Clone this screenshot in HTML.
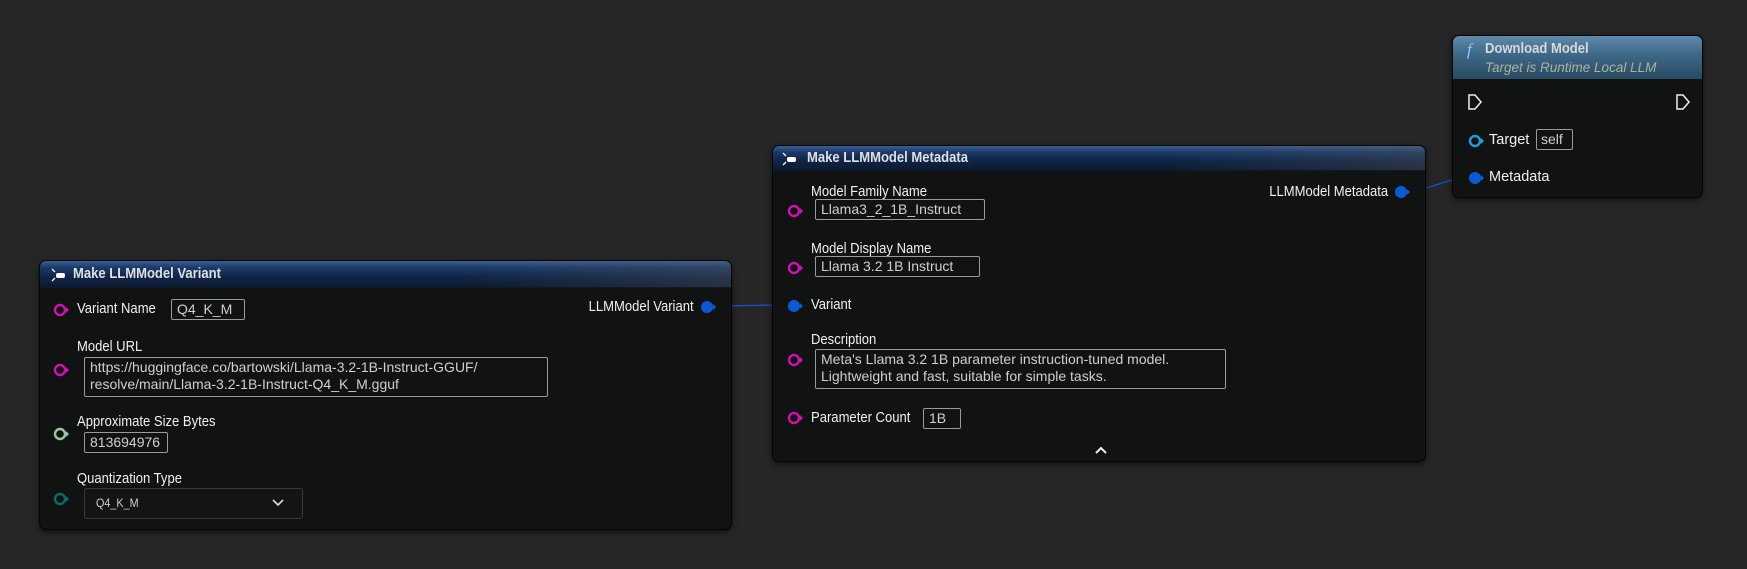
<!DOCTYPE html>
<html><head><meta charset="utf-8"><style>
*{box-sizing:border-box;margin:0;padding:0}
body{width:1747px;height:569px;background:#262626;font-family:"Liberation Sans",sans-serif;color:#e6e6e6;position:relative;overflow:hidden}
.node{position:absolute;background:#111312;border:1px solid #050505;border-radius:7px;box-shadow:0 2px 6px rgba(0,0,0,.6)}
.hdr{position:absolute;left:0;top:0;right:0;border-radius:6px 6px 0 0;border-bottom:1px solid #0c1a2e}
.blue{background:linear-gradient(90deg,rgba(0,0,0,0) 60%,rgba(90,90,90,.35) 100%),linear-gradient(180deg,#3a5f94 0%,#1b3a6a 25%,#0f2547 60%,#0c1a30 100%)}
.t{position:absolute;font-size:14.5px;white-space:nowrap;color:#f0f0f0;transform:scaleX(.9);transform-origin:left center}
.tr{transform-origin:right center;text-align:right}
.tt{position:absolute;font-size:14.5px;font-weight:bold;color:#d6d6d6;white-space:nowrap;transform:scaleX(.9);transform-origin:left center}
.box{position:absolute;border:1px solid #9a9a9a;border-radius:2px;font-size:14px;color:#cfcfcf;padding:1px 5px;line-height:17px;white-space:nowrap}
.pin{position:absolute}
</style></head><body>
<svg width="1747" height="569" style="position:absolute;left:0;top:0">
<path d="M706 306 C740 306,760 305,794 305" stroke="#1050c0" stroke-width="1.5" fill="none"/>
<path d="M1400 192 C1430 192,1445 177,1474 177" stroke="#1050c0" stroke-width="1.5" fill="none"/>
</svg>

<!-- Variant node -->
<div class="node" style="left:39px;top:260px;width:693px;height:270px">
<div class="hdr blue" style="height:27px"></div>
<svg class="pin" style="left:10px;top:6px" width="16" height="16"><path d="M2 2l3 3M2 14l3-3" stroke="#fff" stroke-width="1.3"/><rect x="6" y="6" width="9" height="5" rx="2" fill="#fff"/></svg>
<div class="tt" style="left:33px;top:5px;color:#e0e0e0">Make LLMModel Variant</div>
<svg class="pin" style="left:13px;top:41px" width="16" height="16"><circle cx="7" cy="8" r="5" stroke="#d010b0" stroke-width="2.4" fill="none"/><path d="M13 5l3 3-3 3z" fill="#d010b0"/></svg>
<div class="t" style="left:37px;top:40px">Variant Name</div>
<div class="box" style="left:131px;top:38px;width:74px">Q4_K_M</div>
<div class="t tr" style="right:37px;top:38px">LLMModel Variant</div>
<svg class="pin" style="left:660px;top:38px" width="18" height="16"><circle cx="7" cy="8" r="6" fill="#0a5ad8"/><path d="M13 5l3 3-3 3z" fill="#0a5ad8"/></svg>
<div class="t" style="left:37px;top:78px">Model URL</div>
<svg class="pin" style="left:13px;top:101px" width="16" height="16"><circle cx="7" cy="8" r="5" stroke="#d010b0" stroke-width="2.4" fill="none"/><path d="M13 5l3 3-3 3z" fill="#d010b0"/></svg>
<div class="box" style="left:44px;top:96px;width:464px;height:40px">https://huggingface.co/bartowski/Llama-3.2-1B-Instruct-GGUF/<br>resolve/main/Llama-3.2-1B-Instruct-Q4_K_M.gguf</div>
<div class="t" style="left:37px;top:153px">Approximate Size Bytes</div>
<svg class="pin" style="left:13px;top:165px" width="16" height="16"><circle cx="7" cy="8" r="5" stroke="#9ac89a" stroke-width="2.4" fill="none"/><path d="M13 5l3 3-3 3z" fill="#9ac89a"/></svg>
<div class="box" style="left:44px;top:171px;width:84px">813694976</div>
<div class="t" style="left:37px;top:210px">Quantization Type</div>
<svg class="pin" style="left:13px;top:230px" width="16" height="16"><circle cx="7" cy="8" r="5" stroke="#0e6a66" stroke-width="2.4" fill="none"/><path d="M13 5l3 3-3 3z" fill="#0e6a66"/></svg>
<div style="position:absolute;left:44px;top:227px;width:219px;height:31px;border:1px solid #3a3a3a;border-radius:3px;background:#141414"></div>
<div class="t" style="left:56px;top:235px;font-size:12px;color:#ccc">Q4_K_M</div>
<svg class="pin" style="left:232px;top:237px" width="12" height="10"><path d="M1 2l5 5 5-5" stroke="#ddd" stroke-width="1.6" fill="none"/></svg>
</div>

<!-- Metadata node -->
<div class="node" style="left:772px;top:145px;width:654px;height:317px">
<div class="hdr blue" style="height:25px"></div>
<svg class="pin" style="left:8px;top:5px" width="16" height="16"><path d="M2 2l3 3M2 14l3-3" stroke="#fff" stroke-width="1.3"/><rect x="6" y="6" width="9" height="5" rx="2" fill="#fff"/></svg>
<div class="tt" style="left:34px;top:4px;color:#e0e0e0">Make LLMModel Metadata</div>
<svg class="pin" style="left:14px;top:57px" width="16" height="16"><circle cx="7" cy="8" r="5" stroke="#d010b0" stroke-width="2.4" fill="none"/><path d="M13 5l3 3-3 3z" fill="#d010b0"/></svg>
<div class="t" style="left:38px;top:38px">Model Family Name</div>
<div class="box" style="left:42px;top:53px;width:170px">Llama3_2_1B_Instruct</div>
<div class="t tr" style="right:37px;top:38px">LLMModel Metadata</div>
<svg class="pin" style="left:621px;top:38px" width="18" height="16"><circle cx="7" cy="8" r="6" fill="#0a5ad8"/><path d="M13 5l3 3-3 3z" fill="#0a5ad8"/></svg>
<svg class="pin" style="left:14px;top:114px" width="16" height="16"><circle cx="7" cy="8" r="5" stroke="#d010b0" stroke-width="2.4" fill="none"/><path d="M13 5l3 3-3 3z" fill="#d010b0"/></svg>
<div class="t" style="left:38px;top:95px">Model Display Name</div>
<div class="box" style="left:42px;top:110px;width:165px">Llama 3.2 1B Instruct</div>
<svg class="pin" style="left:14px;top:152px" width="18" height="16"><circle cx="7" cy="8" r="6" fill="#0a5ad8"/><path d="M13 5l3 3-3 3z" fill="#0a5ad8"/></svg>
<div class="t" style="left:38px;top:151px">Variant</div>
<div class="t" style="left:38px;top:186px">Description</div>
<svg class="pin" style="left:14px;top:206px" width="16" height="16"><circle cx="7" cy="8" r="5" stroke="#d010b0" stroke-width="2.4" fill="none"/><path d="M13 5l3 3-3 3z" fill="#d010b0"/></svg>
<div class="box" style="left:42px;top:203px;width:411px;height:40px">Meta's Llama 3.2 1B parameter instruction-tuned model.<br>Lightweight and fast, suitable for simple tasks.</div>
<svg class="pin" style="left:14px;top:264px" width="16" height="16"><circle cx="7" cy="8" r="5" stroke="#d010b0" stroke-width="2.4" fill="none"/><path d="M13 5l3 3-3 3z" fill="#d010b0"/></svg>
<div class="t" style="left:38px;top:264px">Parameter Count</div>
<div class="box" style="left:150px;top:262px;width:38px">1B</div>
<svg class="pin" style="left:322px;top:300px" width="12" height="8"><path d="M1 7l5-5 5 5" stroke="#eee" stroke-width="2" fill="none"/></svg>
</div>

<!-- Download node -->
<div class="node" style="left:1452px;top:35px;width:251px;height:163px">
<div class="hdr" style="height:43px;background:linear-gradient(180deg,#5f8aac 0%,#3f6a8a 40%,#2a4a62 100%);border-bottom:none"></div>
<div style="position:absolute;left:14px;top:4px;font-family:'Liberation Serif',serif;font-style:italic;font-size:17px;color:#8ec8ff">f</div>
<div class="tt" style="left:32px;top:5px;color:#d8d8d8">Download Model</div>
<div style="position:absolute;left:32px;top:24px;font-size:13.5px;font-style:italic;color:#a9b39a;white-space:nowrap">Target is Runtime Local LLM</div>
<svg class="pin" style="left:14px;top:57px" width="16" height="18"><path d="M2 2h6l6 7-6 7H2z" stroke="#eee" stroke-width="1.5" fill="none"/></svg>
<svg class="pin" style="left:222px;top:57px" width="16" height="18"><path d="M2 2h6l6 7-6 7H2z" stroke="#eee" stroke-width="1.5" fill="none"/></svg>
<svg class="pin" style="left:15px;top:97px" width="18" height="16"><circle cx="7" cy="8" r="5" stroke="#1aa0e0" stroke-width="2.4" fill="none"/><path d="M13 5l3 3-3 3z" fill="#1aa0e0"/></svg>
<div class="t" style="left:36px;top:96px;transform:none">Target</div>
<div class="box" style="left:83px;top:93px;width:37px;padding:1px 4px">self</div>
<svg class="pin" style="left:15px;top:134px" width="18" height="16"><circle cx="7" cy="8" r="6" fill="#0a5ad8"/><path d="M13 5l3 3-3 3z" fill="#0a5ad8"/></svg>
<div class="t" style="left:36px;top:133px;transform:none">Metadata</div>
</div>
</body></html>
